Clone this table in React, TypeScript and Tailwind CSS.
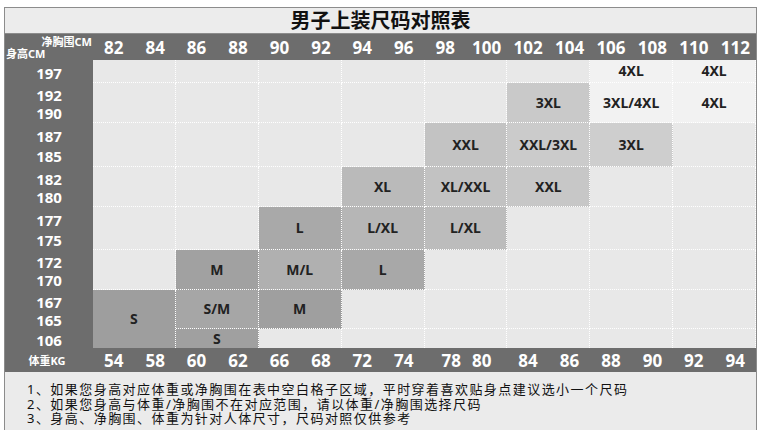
import React from "react";

type Cell = { label?: string; bg: string };

const chest = ["82", "84", "86", "88", "90", "92", "94", "96", "98", "100", "102", "104", "106", "108", "110", "112"];
const weight = ["54", "58", "60", "62", "66", "68", "72", "74", "78", "80", "84", "86", "88", "90", "92", "94"];

const heightRows = [["197"], ["192", "190"], ["187", "185"], ["182", "180"], ["177", "175"], ["172", "170"], ["167", "165"], ["106"]];

const E = "bg-[#e8e8e8]";
const W = "bg-[#f2f2f2]";

// 8 rows x 8 column groups, null = covered by the S cell above
const grid: (Cell | null)[][] = [
  [{ bg: E }, { bg: E }, { bg: E }, { bg: E }, { bg: E }, { bg: E }, { label: "4XL", bg: W }, { label: "4XL", bg: W }],
  [{ bg: E }, { bg: E }, { bg: E }, { bg: E }, { bg: E }, { label: "3XL", bg: "bg-[#c9c9c9]" }, { label: "3XL/4XL", bg: W }, { label: "4XL", bg: W }],
  [{ bg: E }, { bg: E }, { bg: E }, { bg: E }, { label: "XXL", bg: "bg-[#c3c3c3]" }, { label: "XXL/3XL", bg: "bg-[#cbcbcb]" }, { label: "3XL", bg: "bg-[#cecece]" }, { bg: E }],
  [{ bg: E }, { bg: E }, { bg: E }, { label: "XL", bg: "bg-[#bababa]" }, { label: "XL/XXL", bg: "bg-[#c2c2c2]" }, { label: "XXL", bg: "bg-[#c7c7c7]" }, { bg: E }, { bg: E }],
  [{ bg: E }, { bg: E }, { label: "L", bg: "bg-[#a9a9a9]" }, { label: "L/XL", bg: "bg-[#b6b6b6]" }, { label: "L/XL", bg: "bg-[#bcbcbc]" }, { bg: E }, { bg: E }, { bg: E }],
  [{ bg: E }, { label: "M", bg: "bg-[#a1a1a1]" }, { label: "M/L", bg: "bg-[#b0b0b0]" }, { label: "L", bg: "bg-[#a8a8a8]" }, { bg: E }, { bg: E }, { bg: E }, { bg: E }],
  [{ label: "S", bg: "bg-[#9e9e9e]" }, { label: "S/M", bg: "bg-[#a6a6a6]" }, { label: "M", bg: "bg-[#9f9f9f]" }, { bg: E }, { bg: E }, { bg: E }, { bg: E }, { bg: E }],
  [null, { label: "S", bg: "bg-[#a0a0a0]" }, { bg: E }, { bg: E }, { bg: E }, { bg: E }, { bg: E }, { bg: E }],
];

const font = "font-['Noto_Sans','Noto_Sans_CJK_SC',sans-serif]";

export default function App() {
  return (
    <div className={`w-[760px] h-[430px] bg-white pt-[7px] pl-[4px] overflow-hidden ${font}`}>
      <div className="w-[753px] h-[423px] border border-b-0 border-[#8c8c8c] flex flex-col">
        <div className="h-[26px] bg-[#ececec] border-b border-[#8c8c8c] flex items-center justify-center">
          <span className="text-[20px] font-bold text-[#111] leading-none">男子上装尺码对照表</span>
        </div>

        <div className="flex h-[26px] bg-[#6d6d6d] text-white">
          <div className="w-[88px] relative font-bold text-[11px] leading-none">
            <span className="absolute right-[1px] top-[2px]">净胸围CM</span>
            <span className="absolute left-[1px] top-[14px]">身高CM</span>
          </div>
          <div className="flex-1 grid grid-cols-16 items-center">
            {chest.map((c) => (
              <div key={c} className="text-center text-[17px] font-bold leading-none">{c}</div>
            ))}
          </div>
        </div>

        <div className="flex">
          <div className="w-[88px] bg-[#6d6d6d] grid grid-rows-[23px_40px_44px_40px_43px_40px_39px_19px] text-white font-bold text-[15px] leading-none">
            {heightRows.map((r, i) => (
              <div key={i} className="flex flex-col pt-[3px]">
                {r.map((h) => (
                  <div key={h} className="flex-1 flex items-center justify-center">{h}</div>
                ))}
              </div>
            ))}
          </div>
          <div className="flex-1 grid grid-cols-8 grid-rows-[23px_40px_44px_40px_43px_40px_39px_19px] text-[14px] font-bold text-[#222]">
            {grid.map((row, r) =>
              row.map((cell, c) => {
                if (!cell) return null;
                const span = r === 6 && c === 0;
                const bottom = r === 7 || span;
                return (
                  <div
                    key={`${r}-${c}`}
                    className={`${cell.bg} ${span ? "row-span-2" : ""} border-dotted border-white border-r ${bottom ? "" : "border-b"} flex items-center justify-center leading-none`}
                  >
                    {cell.label}
                  </div>
                );
              })
            )}
          </div>
        </div>

        <div className="flex h-[24px] bg-[#6d6d6d] text-white items-center">
          <div className="w-[88px] text-center font-bold text-[11px] leading-none pr-[4px]">体重KG</div>
          <div className="flex-1 grid grid-cols-16 items-center">
            {weight.map((w, i) => (
              <div
                key={w + i}
                className={`text-center text-[17px] font-bold leading-none ${i === 8 ? "translate-x-[6px]" : i === 9 ? "-translate-x-[5px]" : ""}`}
              >
                {w}
              </div>
            ))}
          </div>
        </div>

        <div className="flex-1 bg-[#ebebeb] pl-[22px] pt-[10px] text-[13px] leading-[14.5px] tracking-[1.45px] text-[#111]">
          <p>1、如果您身高对应体重或净胸围在表中空白格子区域，平时穿着喜欢贴身点建议选小一个尺码</p>
          <p>2、如果您身高与体重/净胸围不在对应范围，请以体重/净胸围选择尺码</p>
          <p>3、身高、净胸围、体重为针对人体尺寸，尺码对照仅供参考</p>
        </div>
      </div>
    </div>
  );
}
